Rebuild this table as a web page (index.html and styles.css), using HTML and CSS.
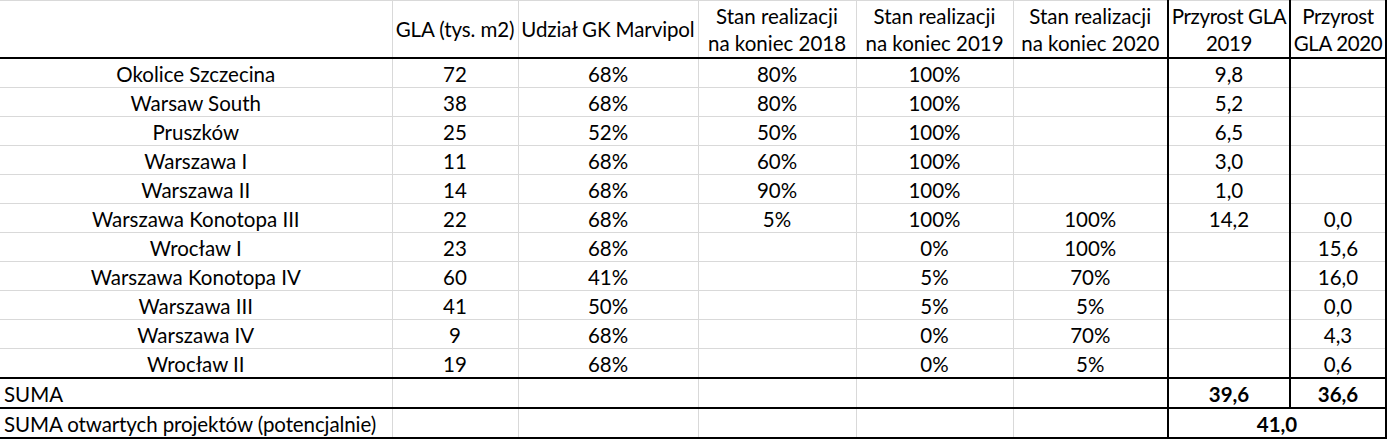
FILE: index.html
```html
<!DOCTYPE html>
<html lang="pl">
<head>
<meta charset="utf-8">
<title>GLA</title>
<link rel="stylesheet" href="styles.css">
</head>
<body>
<table class="sheet">
  <colgroup>
    <col class="c1"><col class="c2"><col class="c3"><col class="c4"><col class="c5"><col class="c6"><col class="c7"><col class="c8">
  </colgroup>
  <thead>
    <tr class="head">
      <th></th>
      <th class="nw">GLA (tys. m2)</th>
      <th class="nw">Udział GK Marvipol</th>
      <th>Stan realizacji<br>na koniec 2018</th>
      <th>Stan realizacji<br>na koniec 2019</th>
      <th>Stan realizacji<br>na koniec 2020</th>
      <th class="bl tight">Przyrost GLA<br>2019</th>
      <th class="bl br tight">Przyrost<br>GLA 2020</th>
    </tr>
  </thead>
  <tbody>
    <tr><td>Okolice Szczecina</td><td>72</td><td>68%</td><td>80%</td><td>100%</td><td></td><td class="bl">9,8</td><td class="bl br"></td></tr>
    <tr><td>Warsaw South</td><td>38</td><td>68%</td><td>80%</td><td>100%</td><td></td><td class="bl">5,2</td><td class="bl br"></td></tr>
    <tr><td>Pruszków</td><td>25</td><td>52%</td><td>50%</td><td>100%</td><td></td><td class="bl">6,5</td><td class="bl br"></td></tr>
    <tr><td>Warszawa I</td><td>11</td><td>68%</td><td>60%</td><td>100%</td><td></td><td class="bl">3,0</td><td class="bl br"></td></tr>
    <tr><td>Warszawa II</td><td>14</td><td>68%</td><td>90%</td><td>100%</td><td></td><td class="bl">1,0</td><td class="bl br"></td></tr>
    <tr><td>Warszawa Konotopa III</td><td>22</td><td>68%</td><td>5%</td><td>100%</td><td>100%</td><td class="bl">14,2</td><td class="bl br">0,0</td></tr>
    <tr><td>Wrocław I</td><td>23</td><td>68%</td><td></td><td>0%</td><td>100%</td><td class="bl"></td><td class="bl br">15,6</td></tr>
    <tr><td>Warszawa Konotopa IV</td><td>60</td><td>41%</td><td></td><td>5%</td><td>70%</td><td class="bl"></td><td class="bl br">16,0</td></tr>
    <tr><td>Warszawa III</td><td>41</td><td>50%</td><td></td><td>5%</td><td>5%</td><td class="bl"></td><td class="bl br">0,0</td></tr>
    <tr><td>Warszawa IV</td><td>9</td><td>68%</td><td></td><td>0%</td><td>70%</td><td class="bl"></td><td class="bl br">4,3</td></tr>
    <tr><td>Wrocław II</td><td>19</td><td>68%</td><td></td><td>0%</td><td>5%</td><td class="bl"></td><td class="bl br">0,6</td></tr>
  </tbody>
  <tfoot>
    <tr class="sum"><td class="lbl">SUMA</td><td></td><td></td><td></td><td></td><td></td><td class="bl b">39,6</td><td class="bl br b">36,6</td></tr>
    <tr class="sum last"><td class="lbl nw">SUMA otwartych projektów (potencjalnie)</td><td></td><td></td><td></td><td></td><td></td><td class="bl br b" colspan="2">41,0</td></tr>
  </tfoot>
</table>
</body>
</html>
```

FILE: styles.css
```css
html, body {
  margin: 0;
  padding: 0;
  background: #fff;
}

.sheet {
  border-collapse: collapse;
  table-layout: fixed;
  width: 1386px;
  font-family: Lato, "Liberation Sans", sans-serif;
  font-size: 20.5px;
  color: #000;
}

.c1 { width: 392px; }
.c2 { width: 126px; }
.c3 { width: 180px; }
.c4 { width: 158px; }
.c5 { width: 157px; }
.c6 { width: 155px; }
.c7 { width: 122px; }
.c8 { width: 96px; }

.sheet th,
.sheet td {
  border: 1px solid #d9d9d9;
  padding: 0;
  text-align: center;
  vertical-align: middle;
  overflow: visible;
}

.sheet th {
  font-weight: normal;
  height: 55px;
  padding-top: 1px;
  line-height: 27px;
  border-bottom: 2px solid #000;
}

.sheet td {
  height: 26px;
  padding-top: 2px;
  line-height: 26px;
}

.sheet th:first-child,
.sheet td:first-child {
  border-left: none;
}

.nw { white-space: nowrap; letter-spacing: -0.1px; }

.sheet .tight { letter-spacing: -0.35px; white-space: nowrap; }

.sheet .bl { border-left: 2px solid #000; }
.sheet .br { border-right: 2px solid #000; }

.sum td { border-top: 2px solid #000; }
.last td { border-bottom: 2px solid #000; }

.sheet .lbl {
  text-align: left;
  padding-left: 4px;
}

.b { font-weight: bold; }
```
